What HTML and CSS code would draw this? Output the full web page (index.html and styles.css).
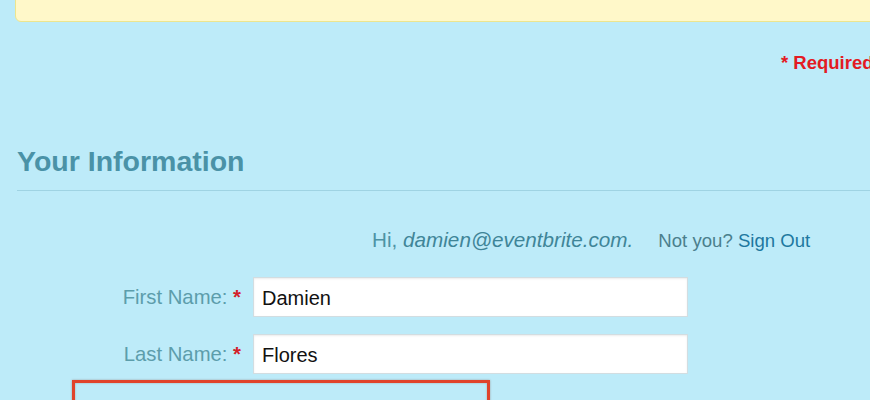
FILE: index.html
```html
<!DOCTYPE html>
<html lang="en">
<head>
  <meta charset="UTF-8" />
  <title>Your Information</title>
  <link rel="stylesheet" href="styles.css">
</head>
<body>
  <div class="notice"></div>
  <div class="required-row"><span class="req">* Required</span></div>
  <h2 class="section-title">Your Information</h2>
  <div class="signed-in">
    <span class="hi">Hi, <em>damien@eventbrite.com.</em></span>
    <span class="not-you">Not you? <a href="#">Sign Out</a></span>
  </div>
  <div class="form">
    <div class="row">
      <label>First Name: <span class="star">*</span></label>
      <input type="text" value="Damien" />
    </div>
    <div class="row">
      <label>Last Name: <span class="star">*</span></label>
      <input type="text" value="Flores" />
    </div>
  </div>
  <div class="highlight"></div>
</body>
</html>
```

FILE: styles.css
```css
body {
  margin: 0;
  background: #bdebf9;
  font-family: "Liberation Sans", Arial, sans-serif;
  overflow: hidden;
  height: 400px;
}
.notice {
  margin: -20px -20px 0 15px;
  height: 40px;
  background: #fff8c9;
  border: 1px solid #ece58f;
  border-radius: 6px;
}
.required-row {
  margin-top: 30px;
  padding-left: 781px;
  white-space: nowrap;
}
.req {
  color: #e31b23;
  font-weight: bold;
  font-size: 18.5px;
}
.section-title {
  margin: 71px 0 0 17px;
  padding-bottom: 12px;
  font-size: 28.5px;
  color: #4a92a7;
  border-bottom: 1px solid #9fd3e3;
}
.signed-in {
  display: flex;
  align-items: baseline;
  margin: 37px 0 0 372px;
  white-space: nowrap;
}
.hi {
  font-size: 20.7px;
  color: #4e93a5;
}
.hi em { color: #3f8598; }
.not-you {
  margin-left: 25px;
  font-size: 18.6px;
  color: #4b7f8d;
}
.not-you a {
  color: #1d78a0;
  text-decoration: none;
}
.form {
  margin-top: 25px;
  display: flex;
  flex-direction: column;
  gap: 17px;
}
.row {
  display: flex;
  align-items: center;
}
.row label {
  width: 241px;
  text-align: right;
  font-size: 20.3px;
  color: #5c9dab;
}
.star { color: #d3202a; font-weight: bold; }
.row input {
  margin-left: 12px;
  width: 435px;
  height: 40px;
  box-sizing: border-box;
  padding: 2px 8px 0;
  border: 1px solid #d2dde1;
  box-shadow: inset 0 1px 2px rgba(0,0,0,0.08);
  font-family: "Liberation Sans", Arial, sans-serif;
  font-size: 20px;
  color: #111;
}
.highlight {
  margin: 6px 0 0 72px;
  width: 412px;
  height: 60px;
  border: 3px solid #e0432b;
  box-shadow: 0 0 2px rgba(120,60,40,0.4), inset 0 0 2px rgba(120,60,40,0.4);
}
```
